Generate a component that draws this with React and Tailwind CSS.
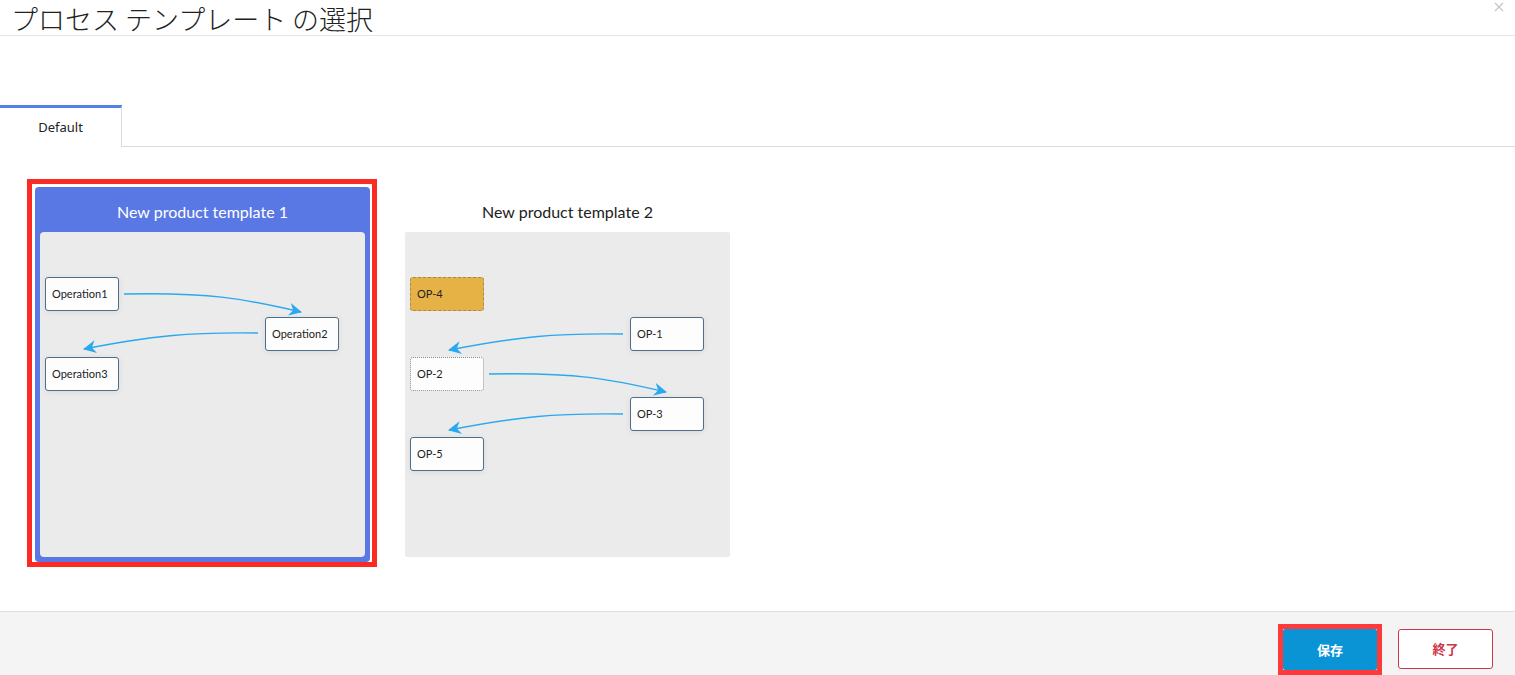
import React from 'react';

const jp = { fontFamily: '"Noto Sans CJK JP", "Noto Sans", sans-serif' };
const latin = { fontFamily: 'Lato, "Noto Sans", sans-serif' };

// node positions are relative to the diagram panel
const templates = [
  {
    id: 't1',
    title: 'New product template 1',
    selected: true,
    nodes: [
      { label: 'Operation1', x: 5, y: 45 },
      { label: 'Operation2', x: 225, y: 85 },
      { label: 'Operation3', x: 5, y: 125 },
    ],
    links: [
      'M84 62 C 170 60, 205 67, 261 80',
      'M218 101 C 150 100, 110 104, 44 117',
    ],
  },
  {
    id: 't2',
    title: 'New product template 2',
    selected: false,
    nodes: [
      { label: 'OP-4', x: 5, y: 45, kind: 'orange' },
      { label: 'OP-1', x: 225, y: 85 },
      { label: 'OP-2', x: 5, y: 125, kind: 'dotted' },
      { label: 'OP-3', x: 225, y: 165 },
      { label: 'OP-5', x: 5, y: 205 },
    ],
    links: [
      'M218 102 C 150 101, 110 105, 44 118',
      'M84 142 C 170 140, 205 147, 261 160',
      'M218 182 C 150 181, 110 185, 44 198',
    ],
  },
];

const Node = ({ node }) => {
  let cls = 'bg-[#fdfdfd] border border-[#4d6f8c] shadow-[0_1px_6px_rgba(0,0,0,0.08)]';
  if (node.kind === 'orange') cls = 'bg-[#e6b145] border border-dashed border-[#a58a55]';
  if (node.kind === 'dotted') cls = 'bg-[#fdfdfd] border border-dotted border-[#8a8a8a]';
  return (
    <div
      className={`absolute w-[74px] h-[34px] rounded-[3px] flex items-center pl-[6px] text-[11px] text-[#222] ${cls}`}
      style={{ left: node.x, top: node.y, ...latin }}
    >
      {node.label}
    </div>
  );
};

const Diagram = ({ t }) => (
  <div
    className={`relative w-[325px] h-[325px] bg-[#ebebeb] ${t.selected ? 'rounded-[4px]' : 'rounded-[2px]'}`}
  >
    <svg className="absolute inset-0" width="325" height="325" viewBox="0 0 325 325">
      <defs>
        <marker
          id={`head-${t.id}`}
          viewBox="0 0 14 14"
          refX="12"
          refY="7"
          markerWidth="14"
          markerHeight="14"
          markerUnits="userSpaceOnUse"
          orient="auto"
        >
          <path d="M0 0.5 L13 7 L0 13.5 L4 7 Z" fill="#2aa8f0" />
        </marker>
      </defs>
      {t.links.map((d, i) => (
        <path
          key={i}
          d={d}
          fill="none"
          stroke="#2aa8f0"
          strokeWidth="1.4"
          markerEnd={`url(#head-${t.id})`}
        />
      ))}
    </svg>
    {t.nodes.map(n => (
      <Node key={n.label} node={n} />
    ))}
  </div>
);

const TemplateCard = ({ t }) => (
  <div
    className={`border-[5px] pt-[3px] pl-[3px] pr-[2px] pb-0 ${
      t.selected ? 'border-[#fb2a22]' : 'border-transparent'
    }`}
  >
    <div
      className={`w-[335px] flex flex-col items-center pb-[5px] rounded-[4px] ${
        t.selected ? 'bg-[#5a78e3] text-white' : 'bg-transparent text-[#222]'
      }`}
    >
      <div className="h-[45px] pt-[4px] flex items-center text-[16px] font-normal" style={latin}>
        {t.title}
      </div>
      <Diagram t={t} />
    </div>
  </div>
);

export default function App() {
  return (
    <div className="w-full h-[675px] flex flex-col bg-white relative overflow-hidden">
      {/* Header */}
      <div className="h-[36px] border-b border-[#e6e6e6] pl-[11px] pt-[3px]">
        <h1 className="text-[27px] leading-[32px] font-light text-[#222]" style={jp}>
          プロセス テンプレート の選択
        </h1>
      </div>
      <button className="absolute right-[10px] top-[1px] w-[12px] h-[12px] flex items-center justify-center">
        <svg width="10" height="10" viewBox="0 0 10 10">
          <path d="M1 1 L9 9 M9 1 L1 9" stroke="#c4c4c4" strokeWidth="1.2" />
        </svg>
      </button>

      {/* Tabs */}
      <div className="mt-[69px] flex">
        <div
          className="w-[122px] h-[42px] border-t-[3px] border-[#4f83e6] border-r border-r-[#dcdcdc] flex items-center justify-center text-[13px] font-normal text-[#222]"
          style={{ fontFamily: '"Noto Sans", sans-serif' }}
        >
          Default
        </div>
        <div className="flex-1 border-b border-[#dcdcdc]" />
      </div>

      {/* Templates */}
      <div className="flex-1 pt-[32px] pl-[27px] flex items-start gap-[15px]">
        {templates.map(t => (
          <TemplateCard key={t.id} t={t} />
        ))}
      </div>

      {/* Footer */}
      <div className="h-[64px] border-t border-[#dedede] bg-[#f4f4f4] flex items-start justify-end pt-[12px] pr-[22px] gap-[16px]">
        <div className="border-[5px] border-[#ff3a3a]">
          <button
            className="w-[94px] h-[41px] rounded-[2px] bg-[#0a94d6] text-white text-[13px] font-bold"
            style={jp}
          >
            保存
          </button>
        </div>
        <button
          className="mt-[5px] w-[95px] h-[40px] rounded-[3px] bg-white border border-[#d0354a] text-[#d0354a] text-[13px] font-bold"
          style={jp}
        >
          終了
        </button>
      </div>
    </div>
  );
}
